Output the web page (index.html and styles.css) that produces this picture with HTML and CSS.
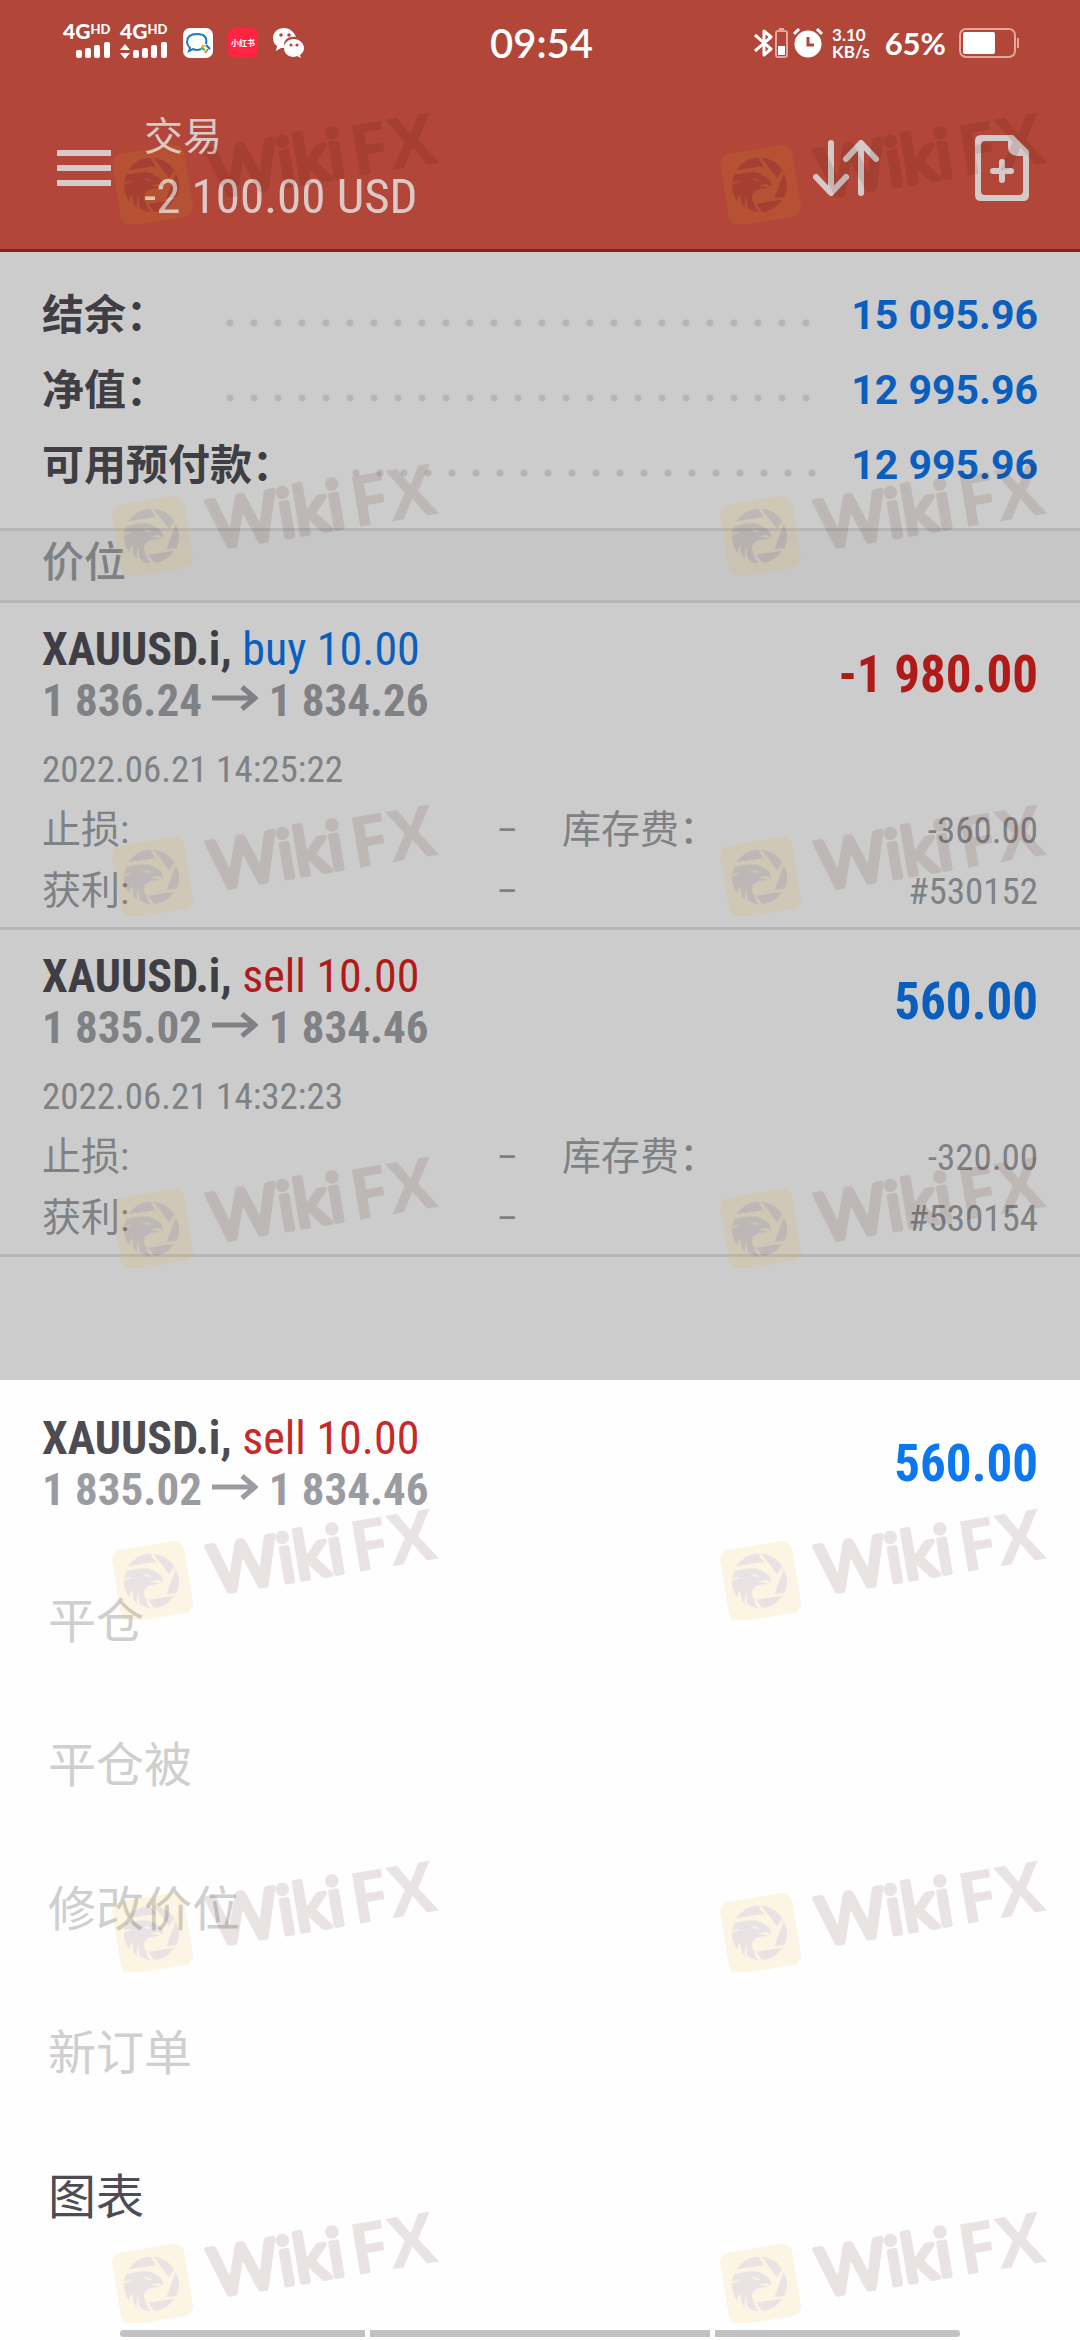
FILE: index.html
```html
<!DOCTYPE html>
<html lang="zh-CN">
<head>
<meta charset="utf-8">
<meta name="viewport" content="width=device-width, initial-scale=1">
<title>交易</title>
<link rel="stylesheet" href="styles.css">
</head>
<body>
<svg class="defs" aria-hidden="true">
  <symbol id="arrow" viewBox="0 0 46 26">
    <path d="M0 13H43M30 2L43 13L30 24" fill="none" stroke="currentColor" stroke-width="5"/>
  </symbol>
  <symbol id="watermark" viewBox="0 0 350 120">
    <g transform="translate(42 81) rotate(-9.5)">
      <rect class="wm-gold" x="-36" y="-36" width="73" height="73" rx="10"/>
    </g>
    <g class="wm-ink" transform="translate(41 81)">
      <path d="M-22.7-14.7L4.8-19L-.7-27.3A27.4 27.4 0 0 0-22.7-14.7Z"/>
      <path d="M2.4-27.3L18-7L23.4-14.7A27.4 27.4 0 0 0 2.4-27.3Z"/>
      <path d="M24.8-12L15.5 13L25.5 12A27.4 27.4 0 0 0 24.8-12Z"/>
      <path d="M23 14.7L-2.8 18.7L3.4 27A27.4 27.4 0 0 0 23 14.7Z"/>
      <path d="M-24.5-10L-13-12.3Q0-14 3.4-9.5Q10-8 12.4-.5Q12 2 11 1.500Q8-2 4-.5L-2 2Q5 0 9.500 3Q-1 3-5 7Q-9 12-5 19Q-3 24-.7 27.300Q-8 27-11.500 22Q-13 17-12 11Q-15 16-14 23Q-19 19-18.500 9Q-22 13-21.500 17Q-27 10-27.200 0Q-23-3-19-3Q-24-5-27-2Q-27-6-24.500-10Z"/>
    </g>
    <path class="wm-gold" d="M34 74L42 76L39 77Q35 77 34 74Z"/>
    <g class="wm-ink" transform="translate(98 97) rotate(-9.500)">
      <text class="wm-wiki" x="6" y="-2">Wiki</text>
      <text class="wm-fx" x="148" y="0">FX</text>
    </g>
  </symbol>
</svg>

<header class="header">
  <div class="status">
    <div class="status-left">
      <span class="signal">
        <span class="net">4G<span class="hd">HD</span></span>
        <svg width="48" height="18" viewBox="0 0 48 18" fill="#fff"><rect x="13" y="9" width="6" height="8" rx="2"/><rect x="22" y="7" width="6" height="10" rx="2"/><rect x="31" y="4" width="6" height="13" rx="2"/><rect x="41" y="1" width="6" height="16" rx="2"/></svg>
      </span>
      <span class="signal">
        <span class="net">4G<span class="hd">HD</span></span>
        <svg width="48" height="18" viewBox="0 0 48 18" fill="#fff"><path d="M0 9L5 3L10 9ZM0 12L5 18L10 12Z"/><rect x="13" y="9" width="6" height="8" rx="2"/><rect x="22" y="7" width="6" height="10" rx="2"/><rect x="31" y="4" width="6" height="13" rx="2"/><rect x="41" y="1" width="6" height="16" rx="2"/></svg>
      </span>
      <svg class="app-icon" width="30" height="30" viewBox="0 0 30 30"><rect width="30" height="30" rx="7" fill="#fff"/><path d="M23 16Q25 6 14 6Q4 6 4 14Q4 17 7 20L6 23L10 21Q14 23 18 21" fill="none" stroke="#2178c4" stroke-width="2"/><path d="M21 17L19 20" stroke="#f5b81c" stroke-width="3"/><path d="M23 17L27 21" stroke="#1b6fd0" stroke-width="2"/><path d="M18 20L22 22" stroke="#4ab83c" stroke-width="2"/><path d="M25 21L22 25" stroke="#ee7a2e" stroke-width="2"/></svg>
      <span class="redbook">小红书</span>
      <svg width="31" height="30" viewBox="0 0 31 30"><path d="M11 0C5 0 0 4 0 10Q0 15 4 18L3 23L8 20Q10 20 12 20C9 12 15 8 23 9C21 4 17 0 11 0Z" fill="#fff"/><path d="M21 11C15 11 11 15 11 20C11 25 15 29 21 29L24 28L28 30L27 27Q31 24 31 20C31 15 26 11 21 11Z" fill="#fff"/><g fill="#b14639"><circle cx="8" cy="7" r="1.800"/><circle cx="16" cy="7" r="1.800"/><circle cx="18" cy="17" r="1.600"/><circle cx="24" cy="17" r="1.600"/></g></svg>
    </div>
    <time class="clock">09:54</time>
    <div class="status-right">
      <svg width="34" height="32" viewBox="0 0 34 32"><path d="M1 8L17 22L10 28V4L17 10L1 24" fill="none" stroke="#fff" stroke-width="3" stroke-linejoin="round"/><rect x="22" y="4" width="11" height="26" rx="2" fill="none" stroke="#e5a49d" stroke-width="2"/><path d="M25 2H30" stroke="#e5a49d" stroke-width="2"/><rect x="24" y="19" width="7" height="9" fill="#fff"/></svg>
      <svg class="alarm" width="30" height="30" viewBox="0 0 30 30"><circle cx="15" cy="16" r="13.500" fill="#fff"/><path d="M1 6L6 1M24 1L29 6" stroke="#fff" stroke-width="3"/><path d="M15 9V17H21" fill="none" stroke="#b14639" stroke-width="3"/></svg>
      <span class="speed"><span>3.10</span><span>KB/s</span></span>
      <span class="percent">65%</span>
      <svg width="61" height="30" viewBox="0 0 61 30"><rect x="1" y="1" width="55" height="28" rx="6" fill="none" stroke="#e5a49d" stroke-width="2"/><path d="M59 10V20" stroke="#e5a49d" stroke-width="2"/><rect x="4" y="4" width="32" height="22" rx="2" fill="#fff"/></svg>
    </div>
  </div>
  <div class="appbar">
    <button class="icon-button" type="button" aria-label="菜单"><svg width="54" height="36" viewBox="0 0 54 36" fill="#d7cbc9"><path d="M0 0H54V6H0ZM0 15H54V21H0ZM0 30H54V36H0Z"/></svg></button>
    <div class="titles">
      <h1 class="title">交易</h1>
      <p class="total">-2 100.00 USD</p>
    </div>
    <button class="icon-button sort" type="button" aria-label="排序"><svg width="66" height="56" viewBox="0 0 66 56"><path d="M18 3V52M3 37L18 53L33 37M48 53V4M33 19L48 3L63 19" fill="none" stroke="#d4cac9" stroke-width="6" stroke-linecap="round" stroke-linejoin="round"/></svg></button>
    <button class="icon-button" type="button" aria-label="新订单"><svg width="54" height="66" viewBox="0 0 54 66"><path d="M6 0H38L54 16V60Q54 66 48 66H6Q0 66 0 60V6Q0 0 6 0ZM10 6Q6 6 6 10V56Q6 60 10 60H44Q48 60 48 56V21H42Q33 20 33 12V6Z" fill="#d4cac9" fill-rule="evenodd"/><path d="M27 27V45M18 36H36" stroke="#d4cac9" stroke-width="6" stroke-linecap="round"/></svg></button>
  </div>
</header>

<main class="trade">
  <dl class="summary">
    <div class="summary-row"><dt>结余：</dt><dd>15 095.96</dd></div>
    <div class="summary-row"><dt>净值：</dt><dd>12 995.96</dd></div>
    <div class="summary-row"><dt>可用预付款：</dt><dd>12 995.96</dd></div>
  </dl>
  <h2 class="section-title">价位</h2>
  <article class="position">
    <div class="position-head">
      <div>
        <p class="symbol"><b>XAUUSD.i,</b> <span class="buy">buy 10.00</span></p>
        <p class="prices">1 836.24 <svg class="arrow"><use href="#arrow"/></svg> 1 834.26</p>
      </div>
      <p class="profit loss">-1 980.00</p>
    </div>
    <p class="time">2022.06.21 14:25:22</p>
    <dl class="details">
      <div><dt>止损:</dt><dd>–</dd></div>
      <div><dt>库存费：</dt><dd>-360.00</dd></div>
      <div><dt>获利:</dt><dd>–</dd></div>
      <div class="ticket"><dd>#530152</dd></div>
    </dl>
  </article>
  <article class="position">
    <div class="position-head">
      <div>
        <p class="symbol"><b>XAUUSD.i,</b> <span class="sell">sell 10.00</span></p>
        <p class="prices">1 835.02 <svg class="arrow"><use href="#arrow"/></svg> 1 834.46</p>
      </div>
      <p class="profit gain">560.00</p>
    </div>
    <p class="time">2022.06.21 14:32:23</p>
    <dl class="details">
      <div><dt>止损:</dt><dd>–</dd></div>
      <div><dt>库存费：</dt><dd>-320.00</dd></div>
      <div><dt>获利:</dt><dd>–</dd></div>
      <div class="ticket"><dd>#530154</dd></div>
    </dl>
  </article>
</main>

<section class="sheet">
  <div class="position-head">
    <div>
      <p class="symbol"><b>XAUUSD.i,</b> <span class="sell">sell 10.00</span></p>
      <p class="prices">1 835.02 <svg class="arrow"><use href="#arrow"/></svg> 1 834.46</p>
    </div>
    <p class="profit gain">560.00</p>
  </div>
  <div class="menu">
    <button class="menu-item" type="button" disabled>平仓</button>
    <button class="menu-item" type="button" disabled>平仓被</button>
    <button class="menu-item" type="button" disabled>修改价位</button>
    <button class="menu-item" type="button" disabled>新订单</button>
    <button class="menu-item" type="button">图表</button>
  </div>
  <div class="gesture-bar"><i></i><i></i><i></i></div>
</section>

<div class="watermarks" aria-hidden="true">
  <svg><use href="#watermark"/></svg><svg><use href="#watermark"/></svg>
  <svg><use href="#watermark"/></svg><svg><use href="#watermark"/></svg>
  <svg><use href="#watermark"/></svg><svg><use href="#watermark"/></svg>
  <svg><use href="#watermark"/></svg><svg><use href="#watermark"/></svg>
  <svg><use href="#watermark"/></svg><svg><use href="#watermark"/></svg>
  <svg><use href="#watermark"/></svg><svg><use href="#watermark"/></svg>
  <svg><use href="#watermark"/></svg><svg><use href="#watermark"/></svg>
</div>
</body>
</html>
```

FILE: styles.css
```css
:root {
  --condensed: "Roboto Condensed", "Liberation Sans Narrow", Roboto, "Noto Sans CJK SC", sans-serif;
  --regular: Roboto, "Noto Sans CJK SC", sans-serif;
  --status: Lato, sans-serif;
  --edge: 42px;
  --text: #3f3e45;
  --muted: #7f8184;
  --blue: #0a5fbe;
  --red: #b01b1a;
  --line: #b6b6b6;
}

* { box-sizing: border-box; }

body {
  position: relative;
  display: flex;
  flex-direction: column;
  min-height: 100vh;
  margin: 0;
  background: #fff;
  color: var(--text);
  font-family: var(--condensed);
}

h1, h2, p, dl, dd { margin: 0; font-weight: 400; }
svg { display: block; flex: none; }
button { padding: 0; border: 0; background: none; font: inherit; color: inherit; }
.defs { position: absolute; width: 0; height: 0; }

/* Header */
.header { background: #b14639; border-bottom: 3px solid #8f1f1c; }

.status {
  display: grid;
  grid-template-columns: 1fr auto 1fr;
  align-items: center;
  height: 86px;
  padding: 0 60px 0 63px;
  color: #fff;
  font-family: var(--status);
  font-weight: 700;
}
.status-left, .status-right { display: flex; align-items: center; }
.status-right { justify-content: flex-end; }
.signal { margin-right: 9px; padding-bottom: 6px; }
.net { display: flex; font-size: 21px; line-height: 20px; font-weight: 900; }
.hd { font-size: 13px; line-height: 16px; }
.app-icon { margin-left: 6px; }
.redbook {
  width: 30px;
  height: 30px;
  margin: 0 15px;
  border-radius: 7px;
  background: #ff2442;
  color: #fff;
  font: 700 8px/30px "Noto Sans CJK SC", sans-serif;
  text-align: center;
}
.clock { font-size: 40px; line-height: 48px; font-weight: 600; }
.alarm { margin-left: 5px; }
.speed { display: flex; flex-direction: column; margin: 0 15px 0 9px; font-size: 17px; line-height: 17px; }
.percent { margin-right: 13px; font-size: 31px; line-height: 40px; }

.appbar { display: flex; align-items: center; height: 163px; padding: 0 51px 0 57px; color: #dbc9c7; }
.icon-button { flex: none; }
.sort { margin-right: 96px; }
.titles { flex: 1; padding: 4px 0 0 33px; }
.title { font-size: 39px; line-height: 54px; }
.total { font-size: 49px; line-height: 66px; }

/* Trade page */
.trade { padding-bottom: 123px; background: #ccc; }

.summary { padding: 26px var(--edge) 25px; font-family: var(--regular); font-weight: 700; }
.summary-row { display: flex; align-items: center; font-size: 42px; line-height: 75px; }
.summary-row::before {
  content: "";
  order: 1;
  flex: 1;
  height: 8px;
  margin: 14px 30px 0 58px;
  background: radial-gradient(circle at 4px 4px, #b5b5b5 3px, transparent 4px) 0 0 / 24px 8px;
}
.summary-row dd { order: 2; color: var(--blue); font-size: 41px; font-weight: 700; }

.section-title {
  padding: 0 var(--edge) 6px;
  border: solid var(--line);
  border-width: 3px 0;
  background: #c6c6c6;
  color: var(--muted);
  font: 500 42px/63px var(--regular);
}

.position { padding: 21px var(--edge) 5px; border-bottom: 3px solid var(--line); }
.position-head { display: flex; align-items: center; justify-content: space-between; }
.symbol { font-size: 46px; line-height: 51px; }
.prices { color: var(--muted); font-size: 45px; font-weight: 700; line-height: 51px; }
.arrow { display: inline-block; width: 46px; height: 26px; vertical-align: 5px; }
.profit { font-size: 51px; font-weight: 700; line-height: 64px; }
.buy, .gain { color: var(--blue); }
.sell, .loss { color: var(--red); }

.time { margin-top: 13px; color: var(--muted); font-size: 37px; line-height: 61px; }
.details { display: grid; grid-template-columns: 1fr 1fr; column-gap: 44px; color: var(--muted); font-size: 37px; line-height: 61px; }
.details div { display: flex; justify-content: space-between; }
.details dt { font-size: 39px; }
.details .ticket { justify-content: flex-end; }

/* Bottom sheet */
.sheet {
  --text: #4d4c52;
  --muted: #9b9ca2;
  --blue: #0b78f0;
  --red: #c62a28;
  display: flex;
  flex: 1;
  flex-direction: column;
  padding: 33px 0 3px;
  background: #fefefe;
  color: var(--text);
}
.sheet .position-head { padding: 0 var(--edge); }
.menu { display: flex; flex-direction: column; margin-top: 35px; }
.menu-item { padding: 0 48px; font: 400 48px/144px var(--regular); text-align: left; }
.menu-item:disabled { color: #cfcfcf; }

.gesture-bar { display: grid; grid-template-columns: 245fr 340fr 245fr; gap: 5px; margin-top: auto; padding: 0 120px; }
.gesture-bar i { height: 7px; background: #c2c2c2; }
.gesture-bar i:first-child { border-radius: 4px 0 0 4px; }
.gesture-bar i:last-child { border-radius: 0 4px 4px 0; }

/* Watermark layer */
.watermarks {
  position: absolute;
  inset: 104px 0 0 110px;
  display: grid;
  grid-template-columns: 608px 1fr;
  grid-template-rows: 351px 341px 352px 352px 352px 351px 120px;
  overflow: hidden;
  opacity: 0.1;
  pointer-events: none;
}
.watermarks svg { width: 350px; height: 120px; }
.wm-gold { fill: #f0af05; }
.wm-ink { fill: #410500; }
.wm-wiki { font: 400 67px Lato, sans-serif; stroke: #410500; stroke-width: 5px; stroke-linejoin: round; }
.wm-fx { font: 700 71px "Open Sans", sans-serif; }
```
